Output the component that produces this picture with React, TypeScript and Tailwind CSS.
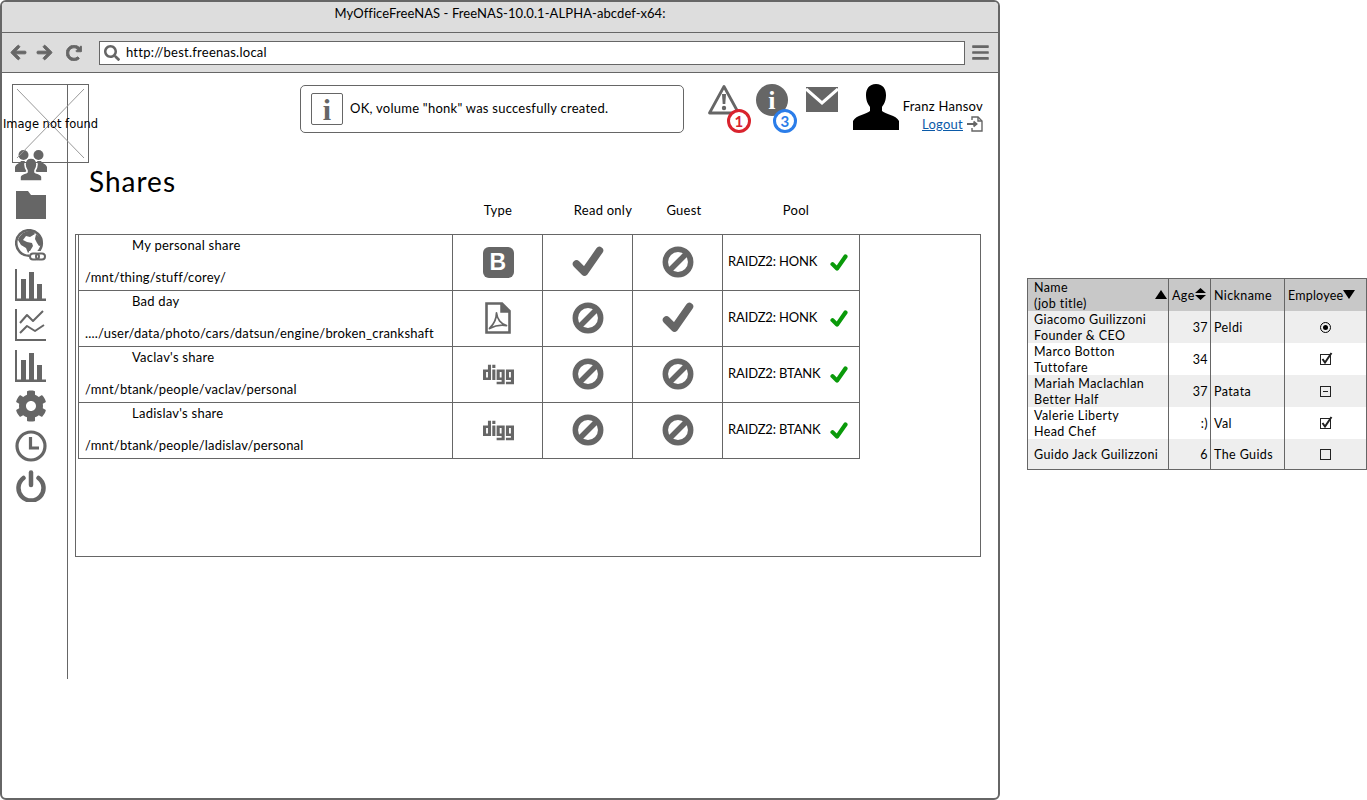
import React from 'react';
import { FaArrowLeft, FaArrowRight, FaRedoAlt, FaSearch, FaBars, FaCog, FaDigg } from 'react-icons/fa';

const GRAY = '#666666';

function Check({ size = 32, color = GRAY }: { size?: number; color?: string }) {
  return (
    <svg width={size} height={size} viewBox="0 0 32 32" fill="none">
      <path d="M4.5 18 L12.5 26 L27.5 4.5" stroke={color} strokeWidth="7.5" strokeLinecap="round" strokeLinejoin="round" />
    </svg>
  );
}

function Ban() {
  return (
    <svg width="32" height="32" viewBox="0 0 32 32" fill="none">
      <circle cx="16" cy="16" r="12.7" stroke={GRAY} strokeWidth="5.5" />
      <path d="M8 24 L24 8" stroke={GRAY} strokeWidth="5.5" />
    </svg>
  );
}

function Bootstrap() {
  return (
    <div className="w-[31px] h-[31px] rounded-[6px] bg-[#666666] flex items-center justify-center text-white font-bold text-[23px] leading-none font-['Liberation_Sans',sans-serif]">
      B
    </div>
  );
}

function PdfIcon() {
  return (
    <svg width="26" height="32" viewBox="0 0 26 32" fill="none" stroke={GRAY}>
      <path d="M1.5 1.5 H17 L24.5 9 V30.5 H1.5 Z" strokeWidth="2.6" />
      <path d="M16 1.5 V10 H24.5" fill={GRAY} strokeWidth="1.5" />
      <path d="M4.5 26.5 C8 23 11.5 17 11.5 11 C12 17 16 22 21.5 23.5 C16 22.5 10 23.5 4.5 26.5 Z" strokeWidth="1.8" strokeLinejoin="round" />
    </svg>
  );
}

function Users() {
  return (
    <svg width="32" height="32" viewBox="0 0 32 32" fill={GRAY}>
      <circle cx="8.5" cy="6" r="5" />
      <circle cx="23.5" cy="6" r="5" />
      <path d="M0 23 V18 C1 15 5 14 6 12 H11 C13 14 16 15 16 18 V23 Z" />
      <path d="M16 23 V18 C16 15 19 14 21 12 H26 C27 14 31 15 32 18 V23 Z" />
      <path
        d="M16 9 C20 9 22 12 22 15.5 C22 18 21 20 20 21.5 V23 C22 24.5 27 25 27 28 V32 H5 V28 C5 25 10 24.5 12 23 V21.5 C11 20 10 18 10 15.5 C10 12 12 9 16 9 Z"
        stroke="#fff"
        strokeWidth="1.6"
      />
    </svg>
  );
}

function Folder() {
  return (
    <svg width="32" height="32" viewBox="0 0 32 32" fill={GRAY}>
      <path d="M1 2 H13 L16 6 H31 V30 H1 Z" />
    </svg>
  );
}

function Globe() {
  return (
    <svg width="32" height="32" viewBox="0 0 32 32" fill="none">
      <circle cx="14" cy="14" r="12.8" stroke={GRAY} strokeWidth="2.6" />
      <path d="M3 11 C5 5 11 1 18 2 L20 5 L15 8 L11 7 L8 11 L12 13 L17 14 L18 17 L15 22 L13 24 L11 19 L6 16 Z" fill={GRAY} />
      <path d="M21 5 L26 9 L27 16 L24 17 L22 14 L20 10 Z" fill={GRAY} />
      <path d="M14 22 H32 V32 H14 Z" fill="#fff" />
      <rect x="15" y="24.5" width="9" height="6" rx="3" stroke={GRAY} strokeWidth="2" />
      <rect x="21" y="24.5" width="9" height="6" rx="3" stroke={GRAY} strokeWidth="2" />
    </svg>
  );
}

function BarChart() {
  return (
    <svg width="32" height="32" viewBox="0 0 32 32" fill={GRAY}>
      <rect x="0" y="0" width="2" height="32" />
      <rect x="0" y="29.5" width="31" height="2.5" />
      <rect x="6" y="10" width="5" height="20" />
      <rect x="14" y="3" width="5" height="27" />
      <rect x="22" y="15" width="5" height="15" />
    </svg>
  );
}

function LineChart() {
  return (
    <svg width="32" height="32" viewBox="0 0 32 32" fill="none" stroke={GRAY}>
      <path d="M1 0 V31 H31" strokeWidth="2" />
      <path d="M5 14 L12 6 L18 12 L28 2" strokeWidth="2" strokeLinejoin="round" />
      <path d="M5 24 L12 17 L20 22 L29 16" strokeWidth="2" strokeLinejoin="round" />
    </svg>
  );
}

function Clock() {
  return (
    <svg width="32" height="32" viewBox="0 0 32 32" fill="none" stroke={GRAY} strokeWidth="3.2">
      <circle cx="16" cy="16" r="14" />
      <path d="M15.5 7 V18 H24" />
    </svg>
  );
}

function Power() {
  return (
    <svg width="32" height="32" viewBox="0 0 32 32" fill="none" stroke={GRAY} strokeWidth="4.5" strokeLinecap="round">
      <path d="M8.5 8 A12.5 12.5 0 1 0 23.5 8" />
      <path d="M16 2.5 V15" />
    </svg>
  );
}

function Warning() {
  return (
    <svg width="32" height="32" viewBox="0 0 32 32" fill="none">
      <path d="M16 2.5 L30.5 29 H1.5 Z" stroke={GRAY} strokeWidth="2.8" strokeLinejoin="round" />
      <path d="M14 10 H18 L17.3 20 H14.7 Z" fill={GRAY} />
      <circle cx="16" cy="24" r="2.2" fill={GRAY} />
    </svg>
  );
}

function Mail() {
  return (
    <svg width="32" height="25" viewBox="0 0 32 25" fill="none">
      <rect width="32" height="25" fill={GRAY} />
      <path d="M0 2 L16 16 L32 2" stroke="#fff" strokeWidth="3" />
    </svg>
  );
}

function Person() {
  return (
    <svg width="46" height="46" viewBox="0 0 46 46" fill="#000">
      <path d="M23 0 C30 0 33 5 33 11 C33 17 31 20 29 23 L29 27 C32 30 43 31 46 37 V46 H0 V37 C3 31 14 30 17 27 L17 23 C15 20 13 17 13 11 C13 5 16 0 23 0 Z" />
    </svg>
  );
}

function LogoutIcon() {
  return (
    <svg width="16" height="16" viewBox="0 0 16 16" fill="none" stroke={GRAY} strokeWidth="1.4">
      <path d="M5 4 V1 H11 L15 5 V15 H5 V12" />
      <path d="M11 1 V5 H15" />
      <path d="M0 8 H9 M6.5 5.5 L9.5 8 L6.5 10.5" strokeWidth="1.8" />
    </svg>
  );
}

function Badge({ n, color, left }: { n: number; color: string; left: number }) {
  return (
    <div
      className="absolute top-[25px] w-[24px] h-[24px] rounded-full bg-white border-[3px] flex items-center justify-center font-bold text-[15px] leading-none"
      style={{ borderColor: color, color, left }}
    >
      {n}
    </div>
  );
}

function SortTri({ down }: { down?: boolean }) {
  return (
    <svg width="12" height="9" viewBox="0 0 12 9" fill="#000" className="-mt-[2px] shrink-0">
      <path d={down ? 'M0 0 H12 L6 9 Z' : 'M6 0 L12 9 H0 Z'} />
    </svg>
  );
}

const sideIcons = [
  <Users />,
  <Folder />,
  <Globe />,
  <BarChart />,
  <LineChart />,
  <BarChart />,
  <FaCog size={32} color={GRAY} />,
  <Clock />,
  <Power />,
];

const digg = <FaDigg size={31} color={GRAY} />;

const shares = [
  { name: 'My personal share', path: '/mnt/thing/stuff/corey/', type: <Bootstrap />, ro: <Check />, guest: <Ban />, pool: 'RAIDZ2: HONK' },
  { name: 'Bad day', path: '..../user/data/photo/cars/datsun/engine/broken_crankshaft', type: <PdfIcon />, ro: <Ban />, guest: <Check />, pool: 'RAIDZ2: HONK' },
  { name: "Vaclav's share", path: '/mnt/btank/people/vaclav/personal', type: digg, ro: <Ban />, guest: <Ban />, pool: 'RAIDZ2: BTANK' },
  { name: "Ladislav's share", path: '/mnt/btank/people/ladislav/personal', type: digg, ro: <Ban />, guest: <Ban />, pool: 'RAIDZ2: BTANK' },
];

function Radio() {
  return (
    <div className="w-[11px] h-[11px] rounded-full border border-black flex items-center justify-center">
      <div className="w-[5px] h-[5px] rounded-full bg-black" />
    </div>
  );
}

function Box({ kind }: { kind: 'check' | 'minus' | 'empty' }) {
  return (
    <svg width="14" height="14" viewBox="0 0 14 14" fill="none" stroke="#222">
      <rect x="1.5" y="2.5" width="10" height="10" />
      {kind === 'check' && <path d="M3.5 7 L6 10.5 L12.5 1" strokeWidth="2" />}
      {kind === 'minus' && <path d="M4 7.5 H9" />}
    </svg>
  );
}

const people = [
  { name: 'Giacomo Guilizzoni', job: 'Founder & CEO', age: '37', nick: 'Peldi', mark: <Radio />, bg: 'bg-[#eeeeee]' },
  { name: 'Marco Botton', job: 'Tuttofare', age: '34', nick: '', mark: <Box kind="check" />, bg: 'bg-white' },
  { name: 'Mariah Maclachlan', job: 'Better Half', age: '37', nick: 'Patata', mark: <Box kind="minus" />, bg: 'bg-[#eeeeee]' },
  { name: 'Valerie Liberty', job: 'Head Chef', age: ':)', nick: 'Val', mark: <Box kind="check" />, bg: 'bg-white' },
  { name: 'Guido Jack Guilizzoni', job: '', age: '6', nick: 'The Guids', mark: <Box kind="empty" />, bg: 'bg-[#eeeeee]' },
];

function PeopleTable() {
  return (
    <div className="w-[340px] h-[192px] mt-[278px] ml-[27px] shrink-0 border border-[#666666] text-[12.5px] leading-4 tracking-[0.4px]">
      <div className="flex h-[32px] bg-[#c8c8c8]">
        <div className="w-[141px] border-r border-[#666666] pl-[6px] pr-[1px] pt-[1px] flex items-center justify-between">
          <div>
            Name
            <br />
            (job title)
          </div>
          <SortTri />
        </div>
        <div className="w-[42px] border-r border-[#666666] pl-[3px] pt-[1px] flex items-center gap-[0px]">
          Age
          <svg width="11" height="12" viewBox="0 0 11 12" fill="#000" className="-mt-[3px] shrink-0">
            <path d="M5.5 0 L11 5 H0 Z M0 7 H11 L5.5 12 Z" />
          </svg>
        </div>
        <div className="w-[74px] border-r border-[#666666] pl-[3px] pt-[1px] flex items-center">Nickname</div>
        <div className="flex-1 pl-[3px] pt-[1px] flex items-center gap-[0px] tracking-[0.2px]">
          Employee
          <SortTri down />
        </div>
      </div>
      {people.map((p, i) => (
        <div key={p.name} className={`flex ${i === 4 ? 'h-[30px]' : 'h-[32px]'} ${p.bg}`}>
          <div className="w-[141px] border-r border-[#666666] pt-[1px] pl-[6px] flex flex-col justify-center whitespace-nowrap">
            <div>{p.name}</div>
            {p.job && <div>{p.job}</div>}
          </div>
          <div className="w-[42px] border-r border-[#666666] pt-[1px] pr-[2px] flex items-center justify-end">{p.age}</div>
          <div className="w-[74px] border-r border-[#666666] pt-[1px] pl-[3px] flex items-center">{p.nick}</div>
          <div className="flex-1 flex items-center justify-center">{p.mark}</div>
        </div>
      ))}
    </div>
  );
}

export default function App() {
  return (
    <div className="flex w-[1367px] h-[800px] overflow-hidden bg-white text-black font-['Lato',sans-serif] tracking-[0.25px] text-[13px]">
      <div className="relative w-[1000px] h-[800px] shrink-0 border-2 border-[#666666] rounded-[6px] overflow-hidden">
        <div className="h-[31px] bg-[#dddddd] border-b border-[#666666] text-center leading-[22px] tracking-[0.08px]">
          MyOfficeFreeNAS - FreeNAS-10.0.1-ALPHA-abcdef-x64:
        </div>
        <div className="h-[40px] bg-[#dddddd] border-b border-[#666666] flex items-center pl-[8px] pr-[8px]">
          <FaArrowLeft size={17} color={GRAY} stroke={GRAY} strokeWidth={30} />
          <FaArrowRight size={17} color={GRAY} stroke={GRAY} strokeWidth={30} className="ml-[9px]" />
          <FaRedoAlt size={16} color={GRAY} stroke={GRAY} strokeWidth={30} className="ml-[13px]" />
          <div className="ml-[17px] w-[868px] h-[24px] bg-white border border-[#666666] flex items-center pl-[4px]">
            <FaSearch size={16} color={GRAY} />
            <span className="ml-[6px]">http://best.freenas.local</span>
          </div>
          <FaBars size={19} color={GRAY} className="ml-[6px]" />
        </div>

        <div className="flex">
          <div className="w-[66px] h-[595px] mt-[11px] border-r border-[#666666] pr-[7px] pt-[61px] flex flex-col items-center shrink-0">
            {sideIcons.map((icon, i) => (
              <div key={i} className="h-[40.1px] flex items-center justify-center">
                {icon}
              </div>
            ))}
          </div>

          <div className="flex-1">
            <div className="h-[90px] pt-[12px] flex items-start">
              <div className="ml-[232px] w-[384px] h-[48px] border border-[#666666] rounded-[5px] flex items-center pl-[10px] shrink-0">
                <div className="w-[32px] h-[32px] border border-[#666666] rounded-[2px] flex items-center justify-center font-['Liberation_Serif',serif] font-bold text-[30px] text-[#666666]">
                  i
                </div>
                <span className="ml-[7px]">OK, volume "honk" was succesfully created.</span>
              </div>
              <div className="relative ml-[24px] -mt-[1px] shrink-0">
                <Warning />
                <Badge n={1} color="#d9232e" left={19} />
              </div>
              <div className="relative ml-[16px] -mt-[1px] shrink-0">
                <div className="w-[32px] h-[32px] rounded-full bg-[#666666] flex items-center justify-center font-['Liberation_Serif',serif] font-bold text-[26px] text-white">
                  i
                </div>
                <Badge n={3} color="#2b7de9" left={17} />
              </div>
              <div className="ml-[18px] mt-[2px] shrink-0">
                <Mail />
              </div>
              <div className="ml-[15px] -mt-[1px] shrink-0">
                <Person />
              </div>
              <div className="ml-[2px] mt-[13px] w-[82px] shrink-0 flex flex-col items-end leading-4 whitespace-nowrap">
                <div>Franz Hansov</div>
                <div className="flex items-center gap-[4px] mt-[2px]">
                  <span className="text-[#0b5aa8] underline">Logout</span>
                  <LogoutIcon />
                </div>
              </div>
            </div>

            <div className="h-[36px] pl-[21px] text-[28px] leading-[36px] tracking-[1px]">Shares</div>
            <div className="mt-[3px] flex h-[16px] leading-4 pl-[385px]">
              <div className="w-[90px] text-center">Type</div>
              <div className="w-[120px] text-center">Read only</div>
              <div className="w-[42px] text-center">Guest</div>
              <div className="w-[182px] text-center">Pool</div>
            </div>

            <div className="mt-[16px] ml-[7px] w-[906px] h-[323px] border border-[#666666] pl-[2px]">
              {shares.map((s) => (
                <div key={s.name} className="flex w-[782px] h-[56px] border-b border-r border-[#666666]">
                  <div className="w-[374px] border-l border-[#666666] pl-[6px] pt-[2px] leading-4 whitespace-nowrap">
                    <div className="pl-[47px]">{s.name}</div>
                    <div className="mt-4 tracking-[0.2px]">{s.path}</div>
                  </div>
                  <div className="w-[90px] border-l border-[#666666] pl-[1px] pb-[1px] flex items-center justify-center">{s.type}</div>
                  <div className="w-[90px] border-l border-[#666666] pl-[1px] pb-[1px] flex items-center justify-center">{s.ro}</div>
                  <div className="w-[90px] border-l border-[#666666] pl-[1px] pb-[1px] flex items-center justify-center">{s.guest}</div>
                  <div className="flex-1 border-l border-[#666666] pl-[5px] flex items-center gap-[10px] whitespace-nowrap">
                    <span className="w-[92px] -mt-[1px] tracking-[-0.15px]">{s.pool}</span>
                    <Check size={18} color="#0a9a0a" />
                  </div>
                </div>
              ))}
            </div>
          </div>
        </div>

        {/* broken image placeholder sits over the sidebar */}
        <div className="absolute left-[10px] top-[82px] w-[77px] h-[79px] border border-[#666666] flex items-center justify-center">
          <svg className="absolute inset-0" width="75" height="77" viewBox="0 0 75 77" stroke="#999999">
            <path d="M4 4 L71 73 M71 4 L4 73" />
          </svg>
          <span className="relative mt-[3px] whitespace-nowrap tracking-normal text-[11.5px] font-['DejaVu_Sans',sans-serif]">Image not found</span>
        </div>
      </div>

      <PeopleTable />
    </div>
  );
}
